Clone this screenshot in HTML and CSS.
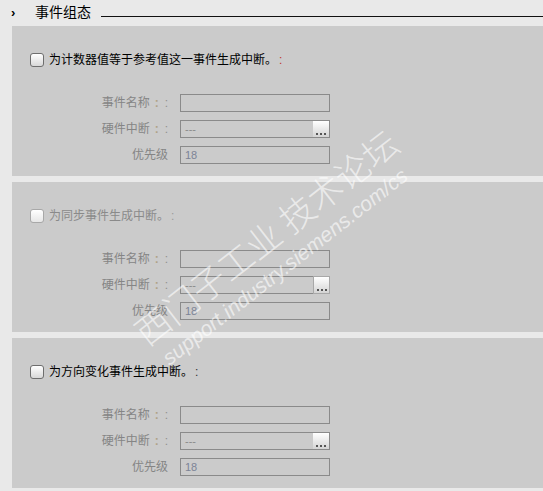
FILE: index.html
```html
<!DOCTYPE html>
<html lang="zh">
<head>
    <meta charset="UTF-8">
    <title>事件组态</title>
    <link rel="stylesheet" href="styles.css">
</head>
<body>
    <div class="page">
        <div class="section-head">
            <span class="chevron">›</span>
            <span class="section-title">事件组态</span>
            <span class="section-line"></span>
        </div>

        <div class="panel">
            <div class="check-row">
                <span class="checkbox"></span>
                <span class="check-text">为计数器值等于参考值这一事件生成中断。<span class="mark">:</span></span>
            </div>
            <div class="fields">
                <label>事件名称<span class="c1">:</span><span class="c2">:</span></label>
                <div class="field"></div>
                <label>硬件中断<span class="c1">:</span><span class="c2">:</span></label>
                <div class="field">---<span class="dots-btn"></span></div>
                <label>优先级</label>
                <div class="field num">18</div>
            </div>
        </div>

        <div class="panel disabled">
            <div class="check-row">
                <span class="checkbox"></span>
                <span class="check-text">为同步事件生成中断。<span class="mark">:</span></span>
            </div>
            <div class="fields">
                <label>事件名称<span class="c1">:</span><span class="c2">:</span></label>
                <div class="field"></div>
                <label>硬件中断<span class="c1">:</span><span class="c2">:</span></label>
                <div class="field split">---<span class="dots-btn"></span></div>
                <label>优先级</label>
                <div class="field num">18</div>
            </div>
        </div>

        <div class="panel">
            <div class="check-row">
                <span class="checkbox"></span>
                <span class="check-text">为方向变化事件生成中断。<span class="mark dark">:</span></span>
            </div>
            <div class="fields">
                <label>事件名称<span class="c1">:</span><span class="c2">:</span></label>
                <div class="field"></div>
                <label>硬件中断<span class="c1">:</span><span class="c2">:</span></label>
                <div class="field">---<span class="dots-btn"></span></div>
                <label>优先级</label>
                <div class="field num">18</div>
            </div>
        </div>

        <div class="watermark">
            <div class="wm-big">西门子工业 技术论坛</div>
            <div class="wm-small">support.industry.siemens.com/cs</div>
        </div>
    </div>
</body>
</html>
```

FILE: styles.css
```css
* {
    margin: 0;
    padding: 0;
    box-sizing: border-box;
}
body {
    font-family: "Liberation Sans", "Noto Sans CJK SC", sans-serif;
    font-size: 12px;
    background-color: #e9e9e9;
    color: #000;
}
.page {
    position: relative;
    width: 543px;
    height: 491px;
    overflow: hidden;
}
.section-head {
    display: flex;
    align-items: center;
    height: 26px;
    padding-left: 11px;
}
.chevron {
    font-size: 13px;
    font-weight: bold;
    width: 24px;
    margin-top: -2px;
}
.section-title {
    font-size: 14px;
    margin-top: -4px;
}
.section-line {
    flex: 1;
    height: 1px;
    background-color: #111;
    margin-left: 10px;
    margin-top: 6px;
}
.panel {
    background-color: #cbcbcb;
    margin-left: 12px;
    height: 150px;
    margin-bottom: 6px;
    padding: 27px 0 0 18px;
}
.panel:last-of-type {
    height: 149px;
}
.check-row {
    display: flex;
    align-items: center;
    height: 14px;
}
.checkbox {
    width: 14px;
    height: 14px;
    border: 1px solid #6e6e6e;
    border-radius: 3px;
    background: linear-gradient(#ffffff, #d8d8d8);
    margin-right: 5px;
}
.check-text {
    line-height: 14px;
}
.mark {
    color: #c0392b;
    margin-left: 2px;
}
.mark.dark {
    color: #333;
}
.disabled .checkbox {
    border-color: #a8a8a8;
    background: linear-gradient(#ffffff, #e6e6e6);
}
.disabled .check-text {
    color: #8a8a8a;
}
.disabled .mark {
    color: #9a9a9a;
}
.fields {
    display: grid;
    grid-template-columns: 138px 150px;
    grid-auto-rows: 18px;
    column-gap: 12px;
    row-gap: 8px;
    margin-top: 27px;
}
.fields label {
    color: #858585;
    text-align: right;
    line-height: 18px;
    white-space: nowrap;
}
.c1 {
    color: #b0a288;
    font-weight: bold;
    margin-left: 5px;
}
.c2 {
    color: #909090;
    margin-left: 6px;
}
.field {
    position: relative;
    border: 1px solid #8a8a8a;
    background-color: #cbcbcb;
    color: #8a8a8a;
    line-height: 16px;
    padding-left: 4px;
    font-size: 11px;
}
.field.num {
    color: #7c8496;
}
.dots-btn {
    position: absolute;
    right: 0;
    top: 0;
    width: 16px;
    height: 16px;
    background: linear-gradient(#ffffff, #d4d4d4);
}
.dots-btn::after {
    content: "";
    position: absolute;
    left: 3px;
    bottom: 2px;
    width: 2px;
    height: 2px;
    background-color: #555;
    box-shadow: 4px 0 #555, 8px 0 #555;
}
.split .dots-btn {
    top: -1px;
    right: -1px;
    height: 18px;
    width: 17px;
    border: 1px solid #a8a8a8;
}
.watermark {
    position: absolute;
    left: 126px;
    top: 320px;
    transform: rotate(-38deg);
    transform-origin: left top;
    pointer-events: none;
    color: rgba(255, 255, 255, 0.6);
}
.wm-big {
    font-family: "Noto Sans CJK SC", sans-serif;
    font-size: 35px;
    font-weight: 300;
    line-height: 40px;
    white-space: nowrap;
}
.wm-small {
    font-size: 21px;
    font-style: italic;
    line-height: 24px;
    white-space: nowrap;
    margin-left: 6px;
    margin-top: 4px;
}
```
